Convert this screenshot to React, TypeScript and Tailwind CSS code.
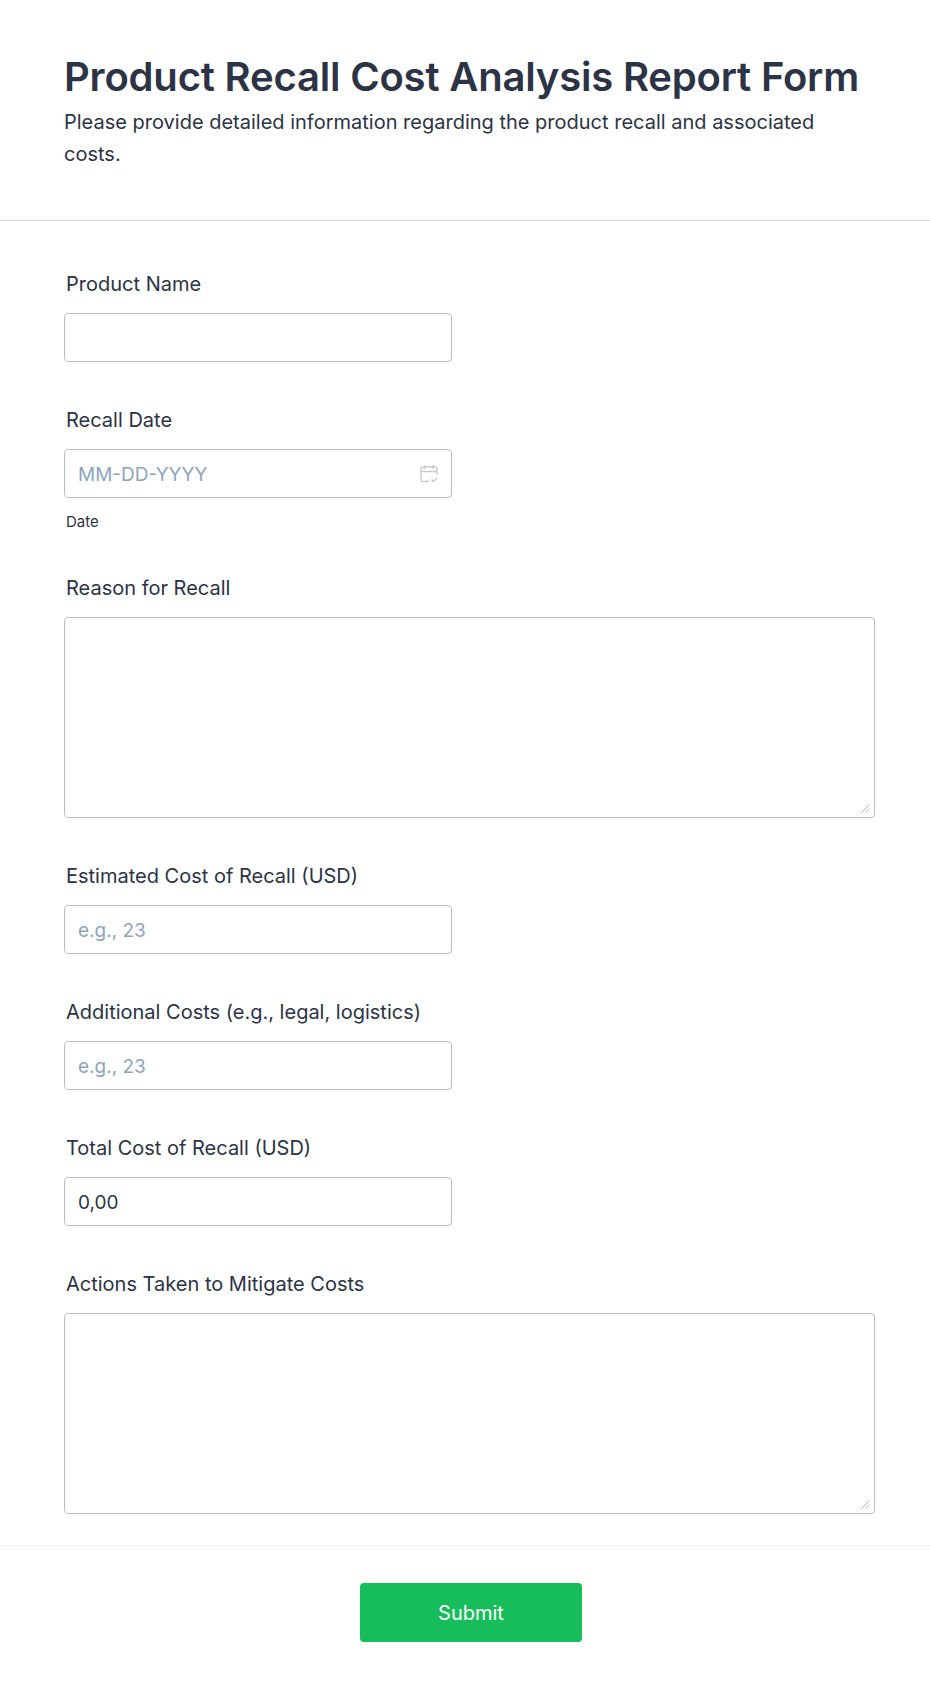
const font = { fontFamily: "Inter, 'Liberation Sans', sans-serif" };

function Label({ children }: { children: React.ReactNode }) {
  return <label className="block h-[24px] pl-[2px] text-[20px] leading-[24px] font-[420] text-[#2c3345] mb-[17px]">{children}</label>;
}

function Field({ label, placeholder, value }: { label: string; placeholder?: string; value?: string }) {
  return (
    <div className="mb-[46px]">
      <Label>{label}</Label>
      <input
        readOnly
        placeholder={placeholder}
        value={value}
        className="block w-[388px] h-[49px] rounded-[4px] border border-[#b8bdc9] bg-white px-[13px] pt-[1px] text-[19px] text-[#2c3345] placeholder:text-[#8ea4bb] outline-none"
      />
    </div>
  );
}

function Area({ label, last }: { label: string; last?: boolean }) {
  return (
    <div className={last ? "" : "mb-[46px]"}>
      <Label>{label}</Label>
      <div className="relative">
        <textarea readOnly className="block w-full h-[201px] resize-none rounded-[4px] border border-[#b8bdc9] bg-white outline-none" />
        <svg className="absolute right-[5px] bottom-[5px]" width="9" height="9" viewBox="0 0 9 9" fill="none" stroke="#aeb3bf" strokeWidth="1">
          <path d="M0.5 8.5l8-8M4.5 8.5l4-4" />
        </svg>
      </div>
    </div>
  );
}

export default function App() {
  return (
    <div style={font} className="w-[930px] h-[1692px] overflow-hidden bg-white text-[#2c3345]">
      <header className="h-[221px] border-b border-[#dadae6] px-[64px] pt-[53px]">
        <h1 className="text-[40px] leading-[48px] tracking-[-0.19px] font-semibold text-[#2c3345] whitespace-nowrap">Product Recall Cost Analysis Report Form</h1>
        <p className="mt-[5px] text-[20px] leading-[32px] font-normal text-[#2c3345]">Please provide detailed information regarding the product recall and associated costs.</p>
      </header>
      <main className="pl-[64px] pr-[55px] pt-[51px]">
        <Field label="Product Name" />
        <div className="mb-[46px]">
          <Label>Recall Date</Label>
          <div className="relative w-[388px]">
            <input readOnly placeholder="MM-DD-YYYY" className="block w-full h-[49px] rounded-[4px] border border-[#b8bdc9] bg-white px-[13px] pt-[1px] text-[19px] placeholder:text-[#8ea4bb] outline-none" />
            <svg className="absolute right-[14px] top-[15px]" width="18" height="19" viewBox="0 0 18 19" fill="none" stroke="#c5c9d6" strokeWidth="1.4">
              <path d="M9 17.5H3a2 2 0 0 1-2-2V5a2 2 0 0 1 2-2h12a2 2 0 0 1 2 2v6" />
              <path d="M1 7.5h16M5 1v4M13 1v4" />
              <path d="M11.5 15.5l2 2 3.5-3.5" />
            </svg>
          </div>
          <div className="mt-[14px] h-[18px] pl-[2px] text-[15px] leading-[19px] text-[#2c3345]">Date</div>
        </div>
        <Area label="Reason for Recall" />
        <Field label="Estimated Cost of Recall (USD)" placeholder="e.g., 23" />
        <Field label="Additional Costs (e.g., legal, logistics)" placeholder="e.g., 23" />
        <Field label="Total Cost of Recall (USD)" value="0,00" />
        <Area label="Actions Taken to Mitigate Costs" last />
      </main>
      <footer className="mt-[31px] border-t border-[#eaebf2] pt-[37px] pl-[12px] flex justify-center">
        <button className="w-[222px] h-[59px] rounded-[4px] bg-[#18bd5b] text-white text-[20px] font-[420]">Submit</button>
      </footer>
    </div>
  );
}
